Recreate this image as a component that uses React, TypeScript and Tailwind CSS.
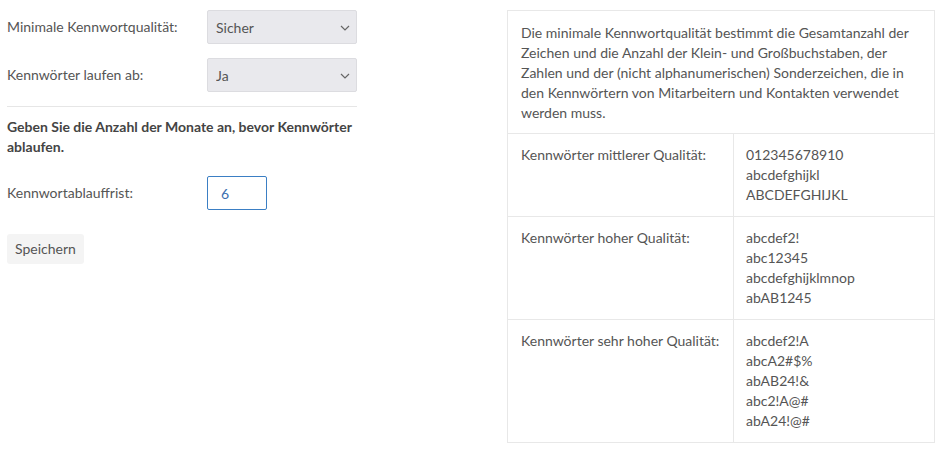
import React, { useState } from 'react'

function Chevron() {
  return (
    <svg width="10" height="6" viewBox="0 0 10 6" className="absolute right-[7px] top-[15px] pointer-events-none">
      <path d="M1 1l4 4 4-4" fill="none" stroke="#666" strokeWidth="1.2" />
    </svg>
  )
}

function Select({ value, options }: { value: string; options: string[] }) {
  const [v, setV] = useState(value)
  return (
    <div className="relative w-[150px]">
      <select
        value={v}
        onChange={(e) => setV(e.target.value)}
        className="appearance-none w-full h-[34px] rounded-[2px] border border-[#dcdce0] bg-[#e9e9ed] pl-[8px] pt-[1px] text-[14px] text-[#555] outline-none"
      >
        {options.map((o) => (
          <option key={o}>{o}</option>
        ))}
      </select>
      <Chevron />
    </div>
  )
}

const rows = [
  { label: 'Kennwörter mittlerer Qualität:', values: ['012345678910', 'abcdefghijkl', 'ABCDEFGHIJKL'] },
  { label: 'Kennwörter hoher Qualität:', values: ['abcdef2!', 'abc12345', 'abcdefghijklmnop', 'abAB1245'] },
  {
    label: 'Kennwörter sehr hoher Qualität:',
    values: ['abcdef2!A', 'abcA2#$%', 'abAB24!&', 'abc2!A@#', 'abA24!@#']
  }
]

export default function App() {
  const [months, setMonths] = useState('6')

  return (
    <div className="flex items-start pt-[10px] pl-[7px] text-[14px] leading-[20px] text-[#555] font-['Lato',sans-serif] bg-white min-h-[454px]">
      <div className="w-[350px]">
        <div className="flex items-center">
          <label className="w-[200px]">Minimale Kennwortqualität:</label>
          <Select value="Sicher" options={['Niedrig', 'Mittel', 'Sicher']} />
        </div>
        <div className="flex items-center mt-[14px]">
          <label className="w-[200px]">Kennwörter laufen ab:</label>
          <Select value="Ja" options={['Ja', 'Nein']} />
        </div>
        <hr className="mt-[14px] border-t border-[#e6e6e6]" />
        <p className="mt-[10px] font-bold text-[#444]">Geben Sie die Anzahl der Monate an, bevor Kennwörter ablaufen.</p>
        <div className="flex items-center mt-[19px]">
          <label className="w-[200px]">Kennwortablauffrist:</label>
          <input
            value={months}
            onChange={(e) => setMonths(e.target.value)}
            className="w-[60px] h-[34px] rounded-[2px] border border-[#3b7fc4] pl-[13px] text-[14px] text-[#3b6fb0] outline-none"
          />
        </div>
        <button className="mt-[24px] h-[30px] px-[8px] rounded-[3px] bg-[#f4f4f4] text-[#555]">Speichern</button>
      </div>

      <div className="ml-[150px] w-[428px] border border-[#e8e8e8]">
        <div className="px-[13px] pt-[12px] pb-[10px]">
          Die minimale Kennwortqualität bestimmt die Gesamtanzahl der Zeichen und die Anzahl der Klein- und Großbuchstaben, der
          Zahlen und der (nicht alphanumerischen) Sonderzeichen, die in den Kennwörtern von Mitarbeitern und Kontakten verwendet
          werden muss.
        </div>
        {rows.map((r) => (
          <div key={r.label} className="flex border-t border-[#e8e8e8]">
            <div className="w-[226px] px-[13px] py-[11px] border-r border-[#e8e8e8]">{r.label}</div>
            <div className="flex-1 px-[12px] py-[11px]">
              {r.values.map((v) => (
                <div key={v}>{v}</div>
              ))}
            </div>
          </div>
        ))}
      </div>
    </div>
  )
}
